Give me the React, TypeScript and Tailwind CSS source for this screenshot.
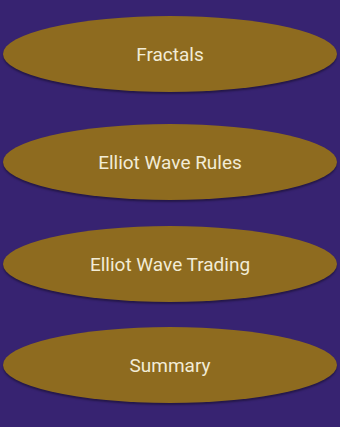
import React from "react";

const items = ["Fractals", "Elliot Wave Rules", "Elliot Wave Trading", "Summary"];

export default function App() {
  return (
    <div
      className="w-[340px] h-[427px] bg-[#372371] flex flex-col items-center pt-[16px] overflow-hidden"
      style={{ fontFamily: "Roboto, 'Liberation Sans', sans-serif" }}
    >
      {items.map((t, i) => (
        <div
          key={t}
          className={`w-[334px] h-[76px] shrink-0 rounded-[50%] bg-[#8e6b1f] flex items-center justify-center pt-[3px] text-[19px] text-[#f2ecd6] shadow-[0_2px_2px_rgba(0,0,0,0.35)] ${
            i === 0 ? "" : i === 1 ? "mt-[32px]" : i === 2 ? "mt-[26px]" : "mt-[25px]"
          }`}
        >
          {t}
        </div>
      ))}
    </div>
  );
}
